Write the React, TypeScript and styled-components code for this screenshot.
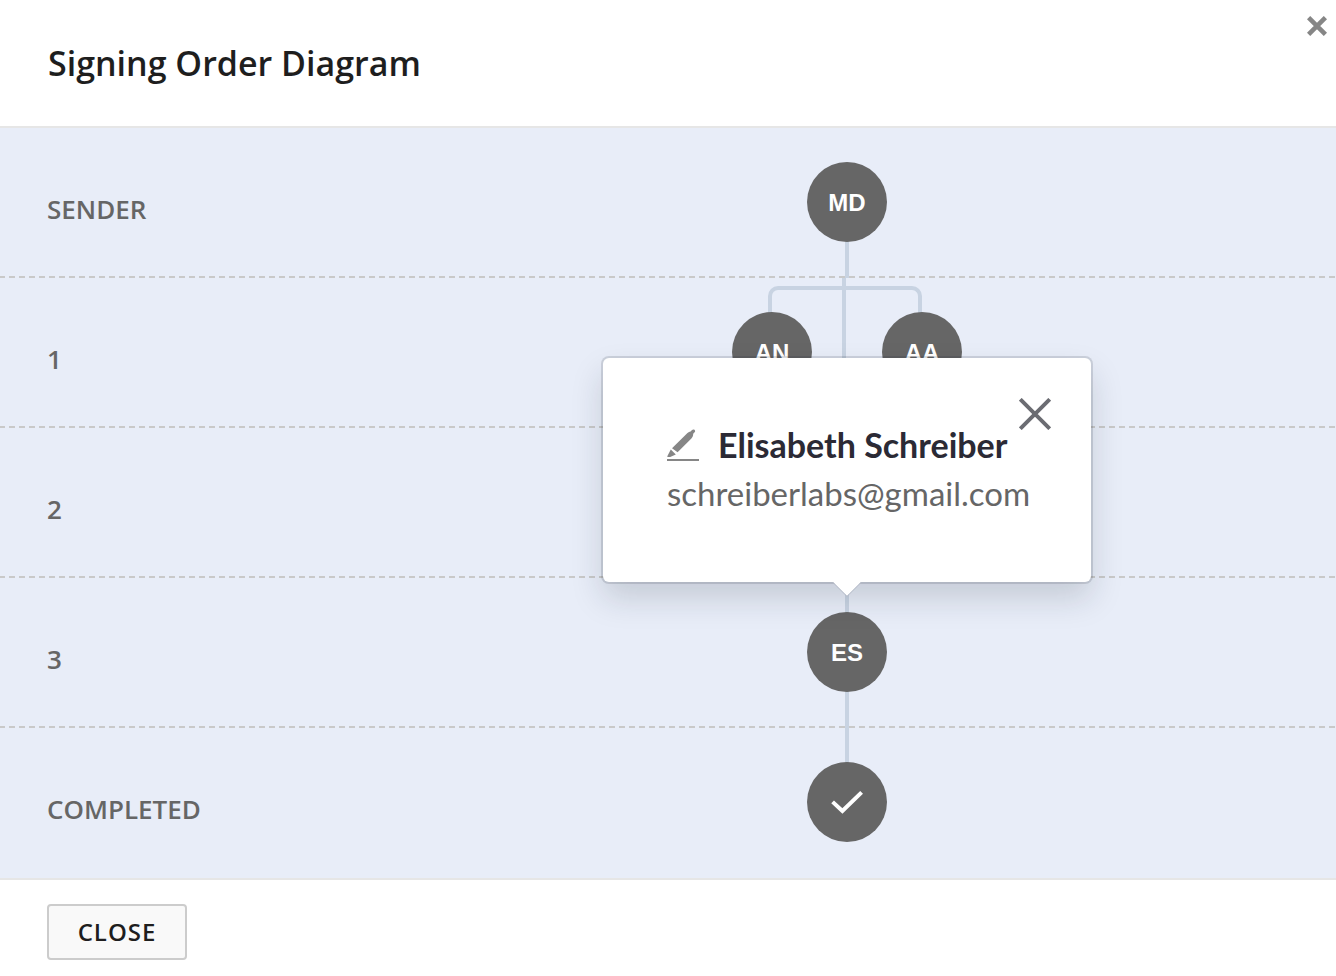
import React from "react";
import styled, { createGlobalStyle } from "styled-components";

const GlobalStyle = createGlobalStyle`
  *, *::before, *::after { box-sizing: border-box; }
  body {
    margin: 0;
    background: #fff;
    font-family: "Open Sans", "Noto Sans", sans-serif;
    color: #1e1e1e;
  }
  h1, h2, p, ol { margin: 0; padding: 0; }
`;

const LINE = "#c8d3e2";

const Dialog = styled.div`
  position: relative;
  min-height: 100vh;
  display: flex;
  flex-direction: column;
  background: #fff;
`;

const Header = styled.header`
  padding: 39px 48px;
  border-bottom: 2px solid #e6e6e6;
`;

const Title = styled.h1`
  font-size: 34px;
  line-height: 48px;
  font-weight: 600;
`;

const IconButton = styled.button<{ $top: number; $right: number; $size: number }>`
  position: absolute;
  top: ${(p) => p.$top}px;
  right: ${(p) => p.$right}px;
  width: ${(p) => p.$size}px;
  height: ${(p) => p.$size}px;
  padding: 0;
  border: 0;
  background: none;
  cursor: pointer;

  svg { display: block; }
`;

const Steps = styled.ol`
  list-style: none;
  background: #e8edf8;
  border-bottom: 2px solid #e6e6e6;
`;

const Step = styled.li`
  display: flex;
  height: 150px;
  background-repeat: repeat-x;
  background-position: left bottom;

  &:not(:last-child) {
    background-image: linear-gradient(to right, #c9c9c9 5px, transparent 5px, transparent 9px, #c9c9c9 9px);
    background-size: 10px 2px;
  }
`;

const StepLabel = styled.h2`
  flex: none;
  width: 358px;
  padding: 65px 0 0 47px;
  font-size: 26px;
  line-height: 32px;
  font-weight: 600;
  color: #666;
`;

const Track = styled.div`
  position: relative;
  flex: 1;
  display: flex;
  justify-content: center;
  align-items: flex-start;
  gap: 70px;
  padding-top: 34px;
`;

const Wire = styled.span<{ $top: number; $height: number; $shift?: number }>`
  position: absolute;
  left: 50%;
  top: ${(p) => p.$top}px;
  width: 4px;
  height: ${(p) => p.$height}px;
  margin-left: ${(p) => p.$shift ?? -2}px;
  background: ${LINE};
`;

const Branch = styled.span`
  position: absolute;
  left: 50%;
  top: 8px;
  width: 154px;
  height: 40px;
  margin-left: -79px;
  border: 4px solid ${LINE};
  border-bottom: 0;
  border-radius: 10px 10px 0 0;
`;

const Node = styled.button`
  position: relative;
  display: flex;
  align-items: center;
  justify-content: center;
  width: 80px;
  height: 80px;
  padding: 1px 0 0;
  border: 0;
  border-radius: 50%;
  background: #666;
  color: #fff;
  font: bold 24px/32px "Liberation Sans", Arial, sans-serif;
  cursor: pointer;

  svg { overflow: visible; }
`;

const Popover = styled.section`
  position: absolute;
  z-index: 2;
  left: 50%;
  bottom: 146px;
  width: 488px;
  margin-left: -244px;
  padding: 63px 56px 65px 64px;
  border-radius: 6px;
  background: #fff;
  box-shadow: 0 0 0 2px rgba(25, 35, 50, 0.14), 0 16px 32px rgba(25, 35, 50, 0.17);
  font-family: Lato, sans-serif;
`;

const PopoverArrow = styled.svg`
  position: absolute;
  left: 50%;
  top: 100%;
  margin-left: -16px;
`;

const Person = styled.h2`
  display: flex;
  align-items: center;
  gap: 19px;
  font-size: 34px;
  line-height: 48px;
  font-weight: 700;
  color: #2b2a35;
  white-space: nowrap;
`;

const Email = styled.p`
  font-size: 33px;
  line-height: 48px;
  color: #666;
  white-space: nowrap;
`;

const Footer = styled.footer`
  padding: 24px 47px 16px;
`;

const CloseButton = styled.button`
  min-width: 140px;
  height: 56px;
  padding: 0 24px;
  border: 2px solid #ccc;
  border-radius: 4px;
  background: #f9f9f9;
  color: #1e1e1e;
  font: 600 24px/32px "Open Sans", "Noto Sans", sans-serif;
  letter-spacing: 1px;
  cursor: pointer;
`;

function PenIcon() {
  return (
    <svg width="32" height="32" viewBox="0 0 32 32" fill="#868686" aria-hidden="true">
      <path d="M5 19.2 19.2 5.2C21 3.5 22.4 2.6 23.6 2.6L25 1.1C26.8-.6 29.2 1.4 27.6 3.3L26.2 4.8C26.2 6.4 25.8 8 24.4 9.4L10.6 23.3Z" />
      <path d="M3.8 20.6 8.8 25.4 3.2 28.1H.5L.3 27.3Z" />
      <path d="M0 30h32v2H0z" />
    </svg>
  );
}

export default function App() {
  return (
    <Dialog role="dialog" aria-labelledby="dialog-title">
      <GlobalStyle />
      <Header>
        <Title id="dialog-title">Signing Order Diagram</Title>
      </Header>
      <IconButton $top={16} $right={9} $size={20} aria-label="Dismiss">
        <svg width="20" height="20" viewBox="0 0 20 20" stroke="#868686" strokeWidth="4.6">
          <path d="M1.6 1.6 18.4 18.4M18.4 1.6 1.6 18.4" />
        </svg>
      </IconButton>

      <Steps>
        <Step>
          <StepLabel>SENDER</StepLabel>
          <Track>
            <Wire $top={74} $height={76} />
            <Node>MD</Node>
          </Track>
        </Step>
        <Step>
          <StepLabel>1</StepLabel>
          <Track>
            <Branch />
            <Wire $top={0} $height={150} $shift={-5} />
            <Node>AN</Node>
            <Node>AA</Node>
          </Track>
        </Step>
        <Step>
          <StepLabel>2</StepLabel>
          <Track>
            <Wire $top={0} $height={150} />
          </Track>
        </Step>
        <Step>
          <StepLabel>3</StepLabel>
          <Track>
            <Wire $top={0} $height={150} />
            <Node>ES</Node>
            <Popover aria-labelledby="signer-name">
              <Person id="signer-name">
                <PenIcon />
                Elisabeth Schreiber
              </Person>
              <Email>schreiberlabs@gmail.com</Email>
              <IconButton $top={40} $right={40} $size={32} aria-label="Close details">
                <svg width="32" height="32" viewBox="0 0 32 32" stroke="#6b6c72" strokeWidth="3.9">
                  <path d="M1.3 1.3 30.7 30.7M30.7 1.3 1.3 30.7" />
                </svg>
              </IconButton>
              <PopoverArrow width="32" height="16" viewBox="0 0 32 16" aria-hidden="true">
                <path d="M1 -1 16 14 31 -1Z" fill="#fff" />
                <path d="M1 -.5 16 14.4 31 -.5" fill="none" stroke="#b4bac7" />
              </PopoverArrow>
            </Popover>
          </Track>
        </Step>
        <Step>
          <StepLabel>COMPLETED</StepLabel>
          <Track>
            <Wire $top={0} $height={40} />
            <Node aria-label="Completed">
              <svg width="32" height="24" viewBox="0 0 32 24" fill="none" stroke="#fff" strokeWidth="4">
                <path d="M1.6 10.9 11.4 20 30.6 1.4" />
              </svg>
            </Node>
          </Track>
        </Step>
      </Steps>

      <Footer>
        <CloseButton>CLOSE</CloseButton>
      </Footer>
    </Dialog>
  );
}
